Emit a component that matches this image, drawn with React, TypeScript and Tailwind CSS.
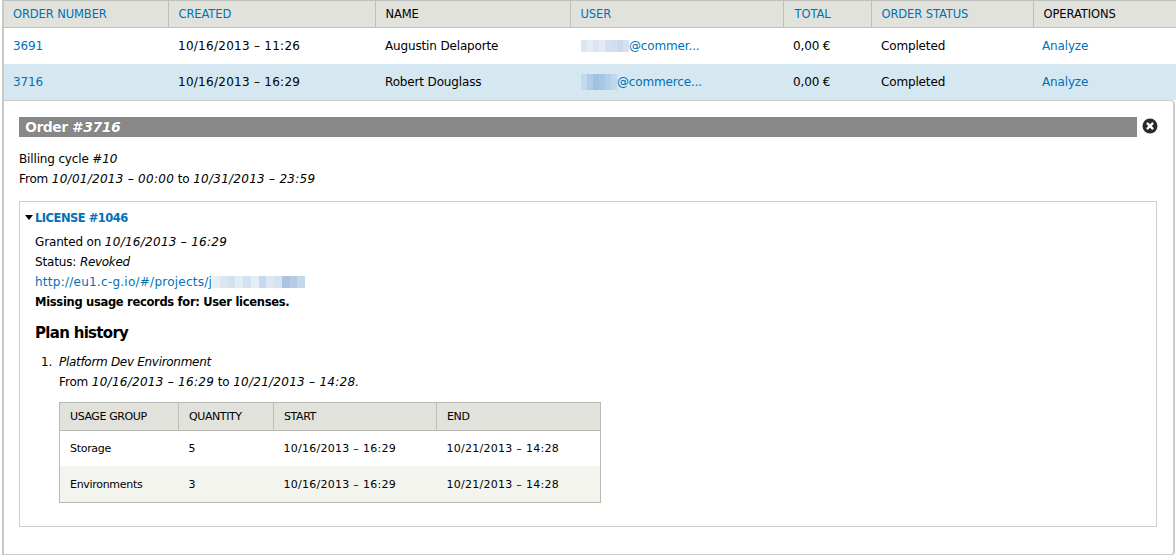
const headers = [
  { label: 'ORDER NUMBER', link: true, width: 'w-[164px]', pad: 'pl-[9px]' },
  { label: 'CREATED', link: true, width: 'w-[207px]', pad: 'pl-[10px]' },
  { label: 'NAME', link: false, width: 'w-[195px]', pad: 'pl-[10px]' },
  { label: 'USER', link: true, width: 'w-[213px]', pad: 'pl-[10px]' },
  { label: 'TOTAL', link: true, width: 'w-[88px]', pad: 'pl-[11px]' },
  { label: 'ORDER STATUS', link: true, width: 'w-[162px]', pad: 'pl-[10px]' },
  { label: 'OPERATIONS', link: false, width: '', pad: 'pl-[10px]' },
];

const usage = [
  { group: 'Storage', quantity: '5', rowClass: 'bg-white h-[36px]' },
  { group: 'Environments', quantity: '3', rowClass: 'bg-[#f3f4ee] h-[36px]' },
];

// pixelated redaction blocks, same mosaic as the screenshot
function Mosaic({ cells, className }: { cells: string[]; className: string }) {
  return (
    <span className={`inline-flex align-middle ${className}`}>
      {cells.map((c, i) => (
        <span key={i} className={`block flex-1 h-full ${c}`} />
      ))}
    </span>
  );
}

function Stamp({ children }: { children: string }) {
  return <span className="tracking-[0.27px]">{children}</span>;
}

function OrderRow({ id, created, name, cells, mosaic, email, rowClass }: { id: string; created: string; name: string; cells: string[]; mosaic: string; email: string; rowClass: string }) {
  return (
    <tr className={`h-[36px] ${rowClass}`}>
      <td className="pl-[9px]"><a className="text-[#0071b8]">{id}</a></td>
      <td className="pl-[10px]"><Stamp>{created}</Stamp></td>
      <td className="pl-[10px]">{name}</td>
      <td className="pl-[11px] whitespace-nowrap">
        <Mosaic cells={cells} className={mosaic} />
        <a className="text-[#0071b8]">{email}</a>
      </td>
      <td className="pl-[10px]">0,00 €</td>
      <td className="pl-[10px]">Completed</td>
      <td className="pl-[9px]"><a className="text-[#0071b8]">Analyze</a></td>
    </tr>
  );
}

export default function App() {
  return (
    <div className="w-[1176px] h-[555px] overflow-hidden bg-white pl-[2px] text-black text-[12px] leading-[20px] tracking-[-0.15px] font-['DejaVu_Sans',sans-serif]">
      <div className="h-full border-l-2 border-[#c8c8c4]">
        <table className="w-[1172px] table-fixed border-collapse">
          <colgroup>
            {headers.map((h) => (
              <col key={h.label} className={h.width} />
            ))}
          </colgroup>
          <thead>
            <tr className="h-[27px] bg-[#e1e2dc] border-y border-[#bebfb9]">
              {headers.map((h) => (
                <th
                  key={h.label}
                  className={`text-left font-normal text-[11.5px] tracking-[-0.1px] border-r last:border-r-0 border-[#bebfb9] ${h.pad} ${h.link ? 'text-[#0071b8]' : 'text-black'}`}
                >
                  {h.label}
                </th>
              ))}
            </tr>
          </thead>
          <tbody>
            <OrderRow
              id="3691"
              created="10/16/2013 – 11:26"
              name="Augustin Delaporte"
              email="@commer..."
              rowClass="bg-white"
              mosaic="w-[48px] h-[12px]"
              cells={['bg-[#dde7f2]', 'bg-[#e6edf5]', 'bg-[#dce6f1]', 'bg-[#e4ebf4]', 'bg-[#d3e0ef]', 'bg-[#d0deee]', 'bg-[#cbdaec]', 'bg-[#d5e1ef]']}
            />
            <OrderRow
              id="3716"
              created="10/16/2013 – 16:29"
              name="Robert Douglass"
              email="@commerce..."
              rowClass="bg-[#d5e7f1]"
              mosaic="w-[36px] h-[16px]"
              cells={['bg-[#c4daec]', 'bg-[#afcde6]', 'bg-[#9fc3e1]', 'bg-[#a6c7e3]', 'bg-[#b1cfe7]', 'bg-[#c0d7ea]']}
            />
          </tbody>
        </table>

        <div className="mr-[1px] h-[455px] border-t border-b border-r-2 border-[#cccccc] rounded-tr-[4px] rounded-br-[4px] pt-[16px] pl-[15px]">
          <div className="flex items-start">
            <h2 className="w-[1118px] h-[20px] bg-[#888888] pl-[6px] text-white text-[14px] tracking-[-0.5px] leading-[20px] font-bold [text-shadow:0_0_1px_#555]">
              Order #<em>3716</em>
            </h2>
            <svg viewBox="0 0 16 16" className="ml-[5px] mt-[1px] w-[16px] h-[16px]">
              <circle cx="8" cy="8" r="7.5" fill="#2a2a2a" />
              <path d="M5.6 5.6l4.8 4.8M10.4 5.6l-4.8 4.8" stroke="#fff" strokeWidth="2.4" strokeLinecap="round" />
            </svg>
          </div>

          <p className="mt-[12px]">Billing cycle #<em>10</em></p>
          <p>From <em><Stamp>10/01/2013 – 00:00</Stamp></em> to <em><Stamp>10/31/2013 – 23:59</Stamp></em></p>

          <fieldset className="mt-[12px] w-[1138px] h-[326px] border border-[#cccccc] pl-[15px] pt-[6px]">
            <div className="flex items-center -ml-[10px] font-bold text-[11.5px] tracking-[-0.5px] text-[#0071b8]">
              <svg viewBox="0 0 8 5" className="w-[8px] h-[5px] mr-[2px]">
                <path d="M0 0h8L4 5z" fill="#000" />
              </svg>
              LICENSE #1046
            </div>
            <p className="mt-[4px]">Granted on <em><Stamp>10/16/2013 – 16:29</Stamp></em></p>
            <p>Status: <em className="tracking-[-0.3px]">Revoked</em></p>
            <p className="flex items-center">
              <a className="text-[#0071b8] tracking-[0.25px]">http://eu1.c-g.io/#/projects/j</a>
              <Mosaic
                className="w-[93px] h-[12px]"
                cells={['bg-[#e8eef6]', 'bg-[#dbe6f2]', 'bg-[#d4e1f0]', 'bg-[#e3ebf5]', 'bg-[#d3e1f0]', 'bg-[#e6edf6]', 'bg-[#c6d8eb]', 'bg-[#dce7f3]', 'bg-[#d5e2f0]', 'bg-[#a9c5e0]', 'bg-[#b4cce4]', 'bg-[#c4d8ec]']}
              />
            </p>
            <p className="font-bold text-[11.5px] tracking-[-0.3px]">Missing usage records for: User licenses.</p>
            <h3 className="mt-[11px] text-[15px] tracking-[-0.7px] leading-[20px] font-bold">Plan history</h3>
            <ol className="mt-[9px] ml-[6px]">
              <li className="flex">
                <span className="w-[18px] shrink-0">1.</span>
                <div>
                  <em className="tracking-[-0.3px]">Platform Dev Environment</em>
                  <br />
                  From <em><Stamp>10/16/2013 – 16:29</Stamp></em> to <em><Stamp>10/21/2013 – 14:28.</Stamp></em>
                </div>
              </li>
            </ol>
            <table className="mt-[10px] ml-[24px] w-[542px] table-fixed border-collapse border border-[#b8b9b3] text-[11px]">
              <colgroup>
                <col className="w-[119px]" />
                <col className="w-[95px]" />
                <col className="w-[163px]" />
                <col />
              </colgroup>
              <thead>
                <tr className="h-[28px] bg-[#e1e2dc] border-b border-[#b8b9b3]">
                  {['USAGE GROUP', 'QUANTITY', 'START', 'END'].map((label) => (
                    <th key={label} className="text-left font-normal tracking-[-0.4px] pl-[10px] pt-[2px] border-r border-[#bebfb9] last:border-r-0">{label}</th>
                  ))}
                </tr>
              </thead>
              <tbody>
                {usage.map((u) => (
                  <tr key={u.group} className={u.rowClass}>
                    <td className="pl-[10px] pt-[2px] tracking-[-0.3px]">{u.group}</td>
                    <td className="pl-[10px] pt-[2px]">{u.quantity}</td>
                    <td className="pl-[10px] pt-[2px]"><Stamp>10/16/2013 – 16:29</Stamp></td>
                    <td className="pl-[10px] pt-[2px]"><Stamp>10/21/2013 – 14:28</Stamp></td>
                  </tr>
                ))}
              </tbody>
            </table>
          </fieldset>
        </div>
      </div>
    </div>
  );
}
